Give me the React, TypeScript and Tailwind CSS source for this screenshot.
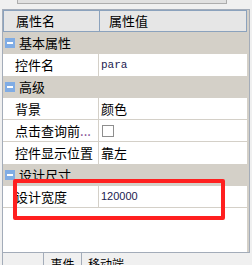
const cjk = { fontFamily: '"Noto Sans CJK SC", "Noto Sans", sans-serif' };

function Minus() {
  return (
    <div className="mr-[4px] flex h-[10px] w-[10px] items-center justify-center bg-[#80ace4]">
      <div className="h-[2px] w-[6px] bg-white" />
    </div>
  );
}

function Group({ label }: { label: string }) {
  return (
    <div className="flex h-[22px] items-center bg-[#d4d0c8] pl-[2px] text-[13px] text-black">
      <Minus />
      <span>{label}</span>
    </div>
  );
}

function Row({ name, children, line = true }: { name: React.ReactNode; children?: React.ReactNode; line?: boolean }) {
  return (
    <div className={`flex h-[22px] bg-white ${line ? "border-b border-[#d4d0c8]" : ""}`}>
      <div className="flex w-[96px] shrink-0 items-center overflow-hidden whitespace-nowrap border-r border-[#d4d0c8] pl-[12px] text-[13px] text-black">
        {name}
      </div>
      <div className="flex flex-1 items-center pl-[2px] text-[13px] text-black">{children}</div>
    </div>
  );
}

export default function App() {
  return (
    <div className="relative h-[265px] w-[252px] overflow-hidden bg-[#f0f0f0]" style={cjk}>
      <div className="ml-[17px] h-[4px] w-[210px] overflow-hidden">
        <div className="-mt-[18px] flex h-[22px] items-center justify-center border border-[#adadad] bg-[#e1e1e1] text-[12px]">
          查看属性
        </div>
      </div>
      <div className="ml-[2px] mt-[5px] flex h-[244px] w-[248px] flex-col border-x border-t border-b border-[#a3acb9] bg-[#d4d0c8] pr-[2px]">
        <div className="flex h-[22px] shrink-0 border border-[#8ba2bd] bg-[#e6e6e6] text-[13px] text-black">
          <div className="flex w-[96px] items-center border-r border-[#8ba2bd] pl-[12px]">属性名</div>
          <div className="flex items-center pl-[9px]">属性值</div>
        </div>
        <Group label="基本属性" />
        <Row name="控件名" line={false}>
          <span className="text-[11px] text-[#1b1b50]" style={{ fontFamily: '"Liberation Mono", monospace' }}>
            para
          </span>
        </Row>
        <Group label="高级" />
        <Row name="背景">颜色</Row>
        <Row
          name={
            <>
              点击查询前<span className="text-[#7a3d8c]">...</span>
            </>
          }
        >
          <div className="ml-[1px] h-[12px] w-[12px] border border-[#8e8e8e] bg-white" />
        </Row>
        <Row name="控件显示位置" line={false}>
          靠左
        </Row>
        <Group label="设计尺寸" />
        <Row name="设计宽度">
          <span className="text-[11px] text-[#1b1b50]" style={{ fontFamily: '"Liberation Sans", sans-serif' }}>
            120000
          </span>
        </Row>
        <div className="flex-1 bg-white" />
      </div>
      <div className="ml-[2px] flex h-[12px] border-l border-[#a3acb9] text-[12px] text-black">
        <div className="w-[41px] border-r border-[#a3acb9]" />
        <div className="flex w-[38px] justify-center border-r border-[#a3acb9] pt-[5px] leading-none">事件</div>
        <div className="pl-[6px] pt-[5px] leading-none">移动端</div>
      </div>
      <div className="absolute left-[13px] top-[179px] h-[41px] w-[212px] rounded-[2px] border-[4px] border-[#ff2020]" />
    </div>
  );
}
